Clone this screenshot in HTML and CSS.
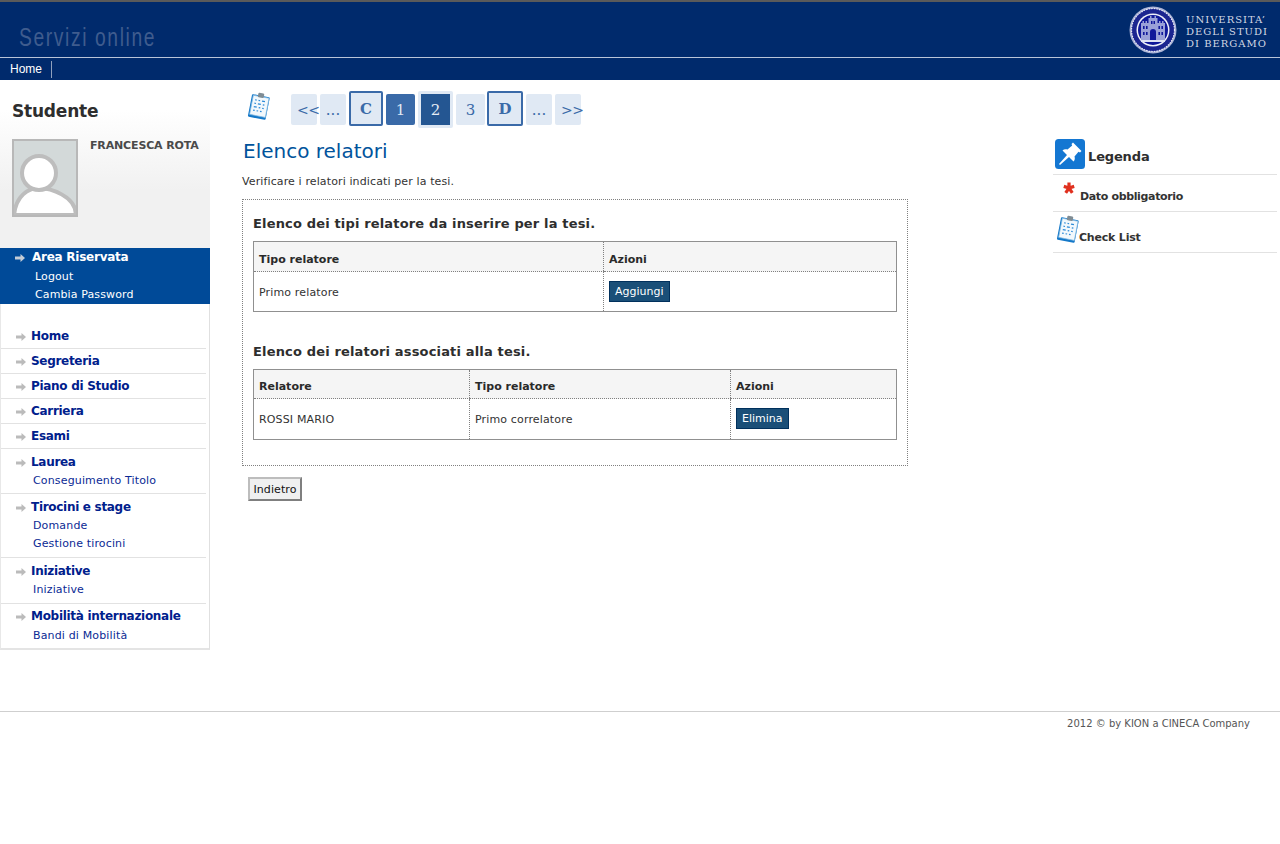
FILE: index.html
```html
<!DOCTYPE html>
<html lang="it">
<head>
<meta charset="utf-8">
<title>Elenco relatori</title>
<link rel="stylesheet" href="styles.css">
</head>
<body>
<svg class="defs" width="0" height="0" aria-hidden="true">
  <defs>
    <symbol id="clip" viewBox="0 0 24 28">
      <g transform="rotate(11 12 14)">
        <rect x="3" y="3.5" width="18" height="23" rx="1" fill="#1478c8"/>
        <rect x="4.4" y="4.5" width="16" height="19.5" fill="#f2f8fc" stroke="#7fb8e2" stroke-width=".7"/>
        <rect x="9" y="1" width="6" height="4.5" rx="1" fill="#7f8c94"/>
        <g fill="#2a8ad8">
          <rect x="7" y="8" width="1.6" height="1.2"/><rect x="10.5" y="8" width="1.6" height="1.2"/><rect x="14" y="8" width="3" height="1.2"/>
          <rect x="7" y="11.5" width="1.6" height="1.2"/><rect x="10.5" y="11.5" width="3" height="1.2"/><rect x="15.5" y="11.5" width="1.6" height="1.2"/>
          <rect x="7" y="15" width="3" height="1.2"/><rect x="12" y="15" width="1.6" height="1.2"/><rect x="15.5" y="15" width="1.6" height="1.2"/>
          <rect x="7" y="18.5" width="1.6" height="1.2"/><rect x="10.5" y="18.5" width="1.6" height="1.2"/><rect x="14" y="18.5" width="1.6" height="1.2"/>
        </g>
      </g>
    </symbol>
    <symbol id="arrow" viewBox="0 0 10 8">
      <path d="M0 2.5H5.5V0L10 4 5.5 8V5.5H0Z"/>
    </symbol>
  </defs>
</svg>

<header class="top">
  <div class="banner">
    <span class="brand">Servizi online</span>
    <div class="uni">
      <svg class="seal" viewBox="0 0 48 48" width="48" height="48" aria-hidden="true">
        <circle cx="24" cy="24" r="23.5" fill="#aab3d6"/>
        <circle cx="24" cy="24" r="21.5" fill="#1b2590" stroke="#e6e9f4" stroke-width="1.2" stroke-dasharray="1.6 1"/>
        <circle cx="24" cy="24" r="16.5" fill="#eef0f8"/>
        <circle cx="24" cy="24" r="15" fill="#10189a"/>
        <path d="M12 34V17h1.5v-2h1.5v2h1.5v-2H18v2h1.5v-5H21v-2h1.5v2h3v-2H27v2h1.5v5H30v-2h1.5v2H33v-2h1.5v2H36v17Z" fill="#9aa1d8"/>
        <path d="M21 34v-8a3 3 0 0 1 6 0v8Z" fill="#10189a"/>
        <path d="M14 20h1.6v3H14ZM17 20h1.6v3H17ZM29.4 20H31v3h-1.6ZM32.4 20H34v3h-1.6ZM14 26h1.6v3H14ZM17 26h1.6v3H17ZM29.4 26H31v3h-1.6ZM32.4 26H34v3h-1.6ZM22 15h1.5v3H22ZM24.5 15H26v3h-1.5Z" fill="#10189a"/>
        <rect x="12" y="34" width="24" height="2" fill="#dfe3f3"/>
      </svg>
      <div class="uni-name">UNIVERSITA’<br>DEGLI STUDI<br>DI BERGAMO</div>
    </div>
  </div>
  <nav class="topnav"><a class="topnav-item">Home</a></nav>
</header>

<div class="page">
  <aside class="side">
    <div class="profile">
      <h2 class="profile-title">Studente</h2>
      <div class="profile-body">
        <svg class="avatar" viewBox="0 0 62 74" width="62" height="74" aria-hidden="true">
          <rect width="62" height="74" fill="#d3d9d9"/>
          <path d="M0 74C2 55 14 47 25 47s37 8 37 27Z" fill="#fff" stroke="#bdbdbd" stroke-width="4"/>
          <circle cx="25" cy="32" r="17" fill="#fff" stroke="#bdbdbd" stroke-width="4"/>
        </svg>
        <div class="profile-name">FRANCESCA ROTA</div>
      </div>
    </div>
    <div class="reserved">
      <div class="reserved-title"><svg class="arrow arrow-light"><use href="#arrow"/></svg>Area Riservata</div>
      <a class="reserved-link">Logout</a>
      <a class="reserved-link">Cambia Password</a>
    </div>
    <ul class="menu">
      <li class="menu-item menu-first"><span class="menu-title"><svg class="arrow"><use href="#arrow"/></svg>Home</span></li>
      <li class="menu-item"><span class="menu-title"><svg class="arrow"><use href="#arrow"/></svg>Segreteria</span></li>
      <li class="menu-item"><span class="menu-title"><svg class="arrow"><use href="#arrow"/></svg>Piano di Studio</span></li>
      <li class="menu-item"><span class="menu-title"><svg class="arrow"><use href="#arrow"/></svg>Carriera</span></li>
      <li class="menu-item"><span class="menu-title"><svg class="arrow"><use href="#arrow"/></svg>Esami</span></li>
      <li class="menu-item menu-group menu-group-tight"><span class="menu-title"><svg class="arrow"><use href="#arrow"/></svg>Laurea</span><a class="menu-sub">Conseguimento Titolo</a></li>
      <li class="menu-item menu-group"><span class="menu-title"><svg class="arrow"><use href="#arrow"/></svg>Tirocini e stage</span><a class="menu-sub">Domande</a><a class="menu-sub">Gestione tirocini</a></li>
      <li class="menu-item menu-group"><span class="menu-title"><svg class="arrow"><use href="#arrow"/></svg>Iniziative</span><a class="menu-sub">Iniziative</a></li>
      <li class="menu-item menu-group menu-last"><span class="menu-title"><svg class="arrow"><use href="#arrow"/></svg>Mobilità internazionale</span><a class="menu-sub">Bandi di Mobilità</a></li>
    </ul>
  </aside>

  <main class="content">
    <div class="pager-row">
      <svg class="clip-lg"><use href="#clip"/></svg>
      <div class="pager">
        <a class="pg pg-w26 pg-arrows">&lt;&lt;</a>
        <a class="pg pg-w26">...</a>
        <a class="pg pg-letter pg-c">C</a>
        <a class="pg pg-done">1</a>
        <span class="pg-current"><a class="pg pg-active">2</a></span>
        <a class="pg">3</a>
        <a class="pg pg-letter pg-d">D</a>
        <a class="pg pg-w26">...</a>
        <a class="pg pg-w26 pg-arrows">&gt;&gt;</a>
      </div>
    </div>
    <h1 class="title">Elenco relatori</h1>
    <p class="intro">Verificare i relatori indicati per la tesi.</p>
    <section class="box">
      <h3 class="box-title">Elenco dei tipi relatore da inserire per la tesi.</h3>
      <table class="grid grid-a">
        <thead><tr><th class="col-a1">Tipo relatore</th><th>Azioni</th></tr></thead>
        <tbody><tr><td>Primo relatore</td><td><a class="btn">Aggiungi</a></td></tr></tbody>
      </table>
      <h3 class="box-title box-title-2">Elenco dei relatori associati alla tesi.</h3>
      <table class="grid grid-b">
        <thead><tr><th class="col-b1">Relatore</th><th class="col-b2">Tipo relatore</th><th>Azioni</th></tr></thead>
        <tbody><tr><td>ROSSI MARIO</td><td>Primo correlatore</td><td><a class="btn">Elimina</a></td></tr></tbody>
      </table>
    </section>
    <button class="back" type="button">Indietro</button>
  </main>

  <aside class="legend">
    <div class="legend-head">
      <svg class="pin" viewBox="0 0 30 30" width="30" height="30" aria-hidden="true">
        <rect width="30" height="30" rx="3.5" fill="#1477d2"/>
        <path d="M18 3.5 26.5 12 25 13.5 23.5 12.8 19.5 17.5C20.2 19.5 19.8 21.2 18.5 22.5L14 18 5 26 4 25 12 16 7.5 11.5C8.8 10.2 10.5 9.8 12.5 10.5L17.2 6.5 16.5 5Z" fill="#fff"/>
      </svg>
      <span class="legend-title">Legenda</span>
    </div>
    <div class="legend-row legend-req">
      <svg class="star" viewBox="0 0 12 12" width="12" height="12" aria-hidden="true">
        <path d="M6 6V.6M6 6 11.2 4.4M6 6 9.3 10.8M6 6 2.7 10.8M6 6 .8 4.4" stroke="#e0301e" stroke-width="3.2"/>
      </svg>
      <span class="legend-text">Dato obbligatorio</span>
    </div>
    <div class="legend-row legend-check">
      <svg class="clip-sm"><use href="#clip"/></svg>
      <span class="legend-text legend-text-check">Check List</span>
    </div>
  </aside>
</div>

<footer class="foot">2012 © by KION a CINECA Company</footer>
</body>
</html>
```
FILE: styles.css
```css
* { box-sizing: border-box; }
html, body { margin: 0; padding: 0; background: #fff; }
body { font-family: "DejaVu Sans", Verdana, sans-serif; font-size: 11px; color: #333; height: 844px; overflow: hidden; }
.defs { display: block; height: 0; }

.top { background: #002a6c; border-top: 2px solid #5a5a5a; height: 80px; }
.banner { height: 56px; border-bottom: 1px solid #b9c4d8; display: flex; justify-content: space-between; align-items: flex-start; }
.brand { display: block; font-family: "Liberation Sans", sans-serif; font-size: 25px; letter-spacing: 2.1px; color: #3f5c8e; margin: 21px 0 0 19px; line-height: 28px; transform: scaleX(.77); transform-origin: left center; white-space: nowrap; }
.uni { display: flex; margin: 4px 12px 0 0; }
.seal { display: block; margin-right: 9px; }
.uni-name { font-family: "DejaVu Serif", serif; font-size: 10px; line-height: 12px; letter-spacing: 1px; color: #d3d8e4; margin-top: 8px; white-space: nowrap; width: 82px; }
.topnav { height: 22px; display: flex; align-items: flex-start; padding-top: 3px; }
.topnav-item { font-family: "Liberation Sans", sans-serif; font-size: 12px; line-height: 17px; color: #fff; padding: 0 9px 0 10px; border-right: 1px solid #8fa0bd; }

.page { display: flex; height: 631px; }

.side { width: 210px; flex: none; }
.profile { height: 168px; padding: 21px 0 0 12px; background: linear-gradient(#fff 30px, #f1f1f1 110px); overflow: hidden; }
.profile-title { margin: 0 0 18px; font-size: 17px; line-height: 20px; font-weight: bold; color: #2e2e2e; letter-spacing: -.2px; }
.profile-body { display: flex; }
.avatar { box-sizing: content-box; border: 2px solid #b8b8b8; width: 62px; height: 74px; display: block; flex: none; }
.profile-name { font-size: 11px; font-weight: bold; color: #4a4a4a; margin: 0 0 0 12px; line-height: 13px; white-space: nowrap; letter-spacing: -.15px; }

.reserved { height: 56px; background: #004a98; color: #fff; padding-top: 1px; }
.reserved-title { font-size: 12px; letter-spacing: -.25px; font-weight: bold; line-height: 16px; padding-left: 15px; display: flex; align-items: center; margin-bottom: 3px; }
.reserved-link { display: block; font-size: 11px; line-height: 18px; padding-left: 35px; letter-spacing: .12px; }
.arrow { width: 10px; height: 8px; margin: 2px 5px 0 0; fill: #bbb; flex: none; display: inline-block; }
.arrow-light { fill: #c4ccd6; margin-right: 7px; }

.menu { list-style: none; margin: 0; padding: 0 0 0 1px; width: 210px; border-left: 1px solid #e8e8e8; border-right: 1px solid #e0e0e0; border-bottom: 2px solid #e4e4e4; }
.menu-item { width: 205px; margin-left: -1px; border-bottom: 1px solid #e2e2e2; padding: 4px 0 4px 15px; }
.menu-first { padding-top: 24px; }
.menu-group { padding-top: 5px; }
.menu-group-tight { padding-bottom: 3px; }
.menu-group .menu-title { margin-bottom: 2px; }
.menu-last { border-bottom: 0; padding-top: 4px; padding-bottom: 3px; }
.menu-last .menu-title { margin-bottom: 3px; }
.menu-title { display: flex; align-items: center; font-size: 12px; letter-spacing: -.3px; font-weight: bold; line-height: 16px; color: #00208c; }
.menu-sub { display: block; font-size: 11px; line-height: 18px; color: #0b2a94; padding-left: 17px; letter-spacing: .15px; }

.content { width: 698px; flex: none; padding: 12px 0 0 32px; }
.pager-row { display: flex; height: 36px; position: relative; }
.clip-lg { width: 24px; height: 28px; margin: 0 0 0 5px; flex: none; }
.pager { display: flex; align-items: flex-start; margin: -1px 0 0 20px; gap: 3px; }
.pg { display: flex; align-items: center; justify-content: center; width: 29px; height: 31px; margin-top: 3px; background: #e0e9f4; border-radius: 2px; color: #3a6aa8; font-family: "DejaVu Serif", serif; font-size: 15px; }
.pg-w26 { width: 26px; }
.pg-arrows { font-family: "DejaVu Sans", sans-serif; font-size: 14px; letter-spacing: -.4px; white-space: nowrap; justify-content: flex-start; padding-left: 6px; }
.pg-letter { height: 35px; margin-top: 0; border: 2px solid #3a6aa8; font-weight: bold; }
.pg-c { width: 34px; }
.pg-d { width: 36px; margin-left: -1px; }
.pg-done { background: #3a6aa8; color: #dfe8f3; }
.pg-current { display: block; width: 35px; height: 37px; background: #e0e9f4; padding: 3px; border-radius: 2px; }
.pg-active { width: 29px; margin: 0; background: #245692; color: #e6edf6; border-radius: 0; }

.title { margin: 10px 0 0 1px; font-size: 20px; line-height: 26px; font-weight: normal; color: #00539c; }
.intro { margin: 11px 0 0; line-height: 14px; font-size: 11px; color: #333; letter-spacing: .12px; }
.box { width: 666px; height: 267px; margin-top: 10px; border: 1px dotted #808080; padding: 16px 10px 0; }
.box-title { margin: 0 0 10px; font-size: 13px; letter-spacing: .16px; line-height: 15px; font-weight: bold; color: #2e2e2e; }
.box-title-2 { margin-top: 32px; }
.grid { width: 644px; border-collapse: collapse; border: 1px solid #909090; table-layout: fixed; }
.grid th, .grid td { text-align: left; padding: 0 5px; font-size: 11px; border-left: 1px dotted #808080; color: #333; }
.grid th:first-child, .grid td:first-child { border-left: 0; }
.grid th { height: 30px; background: #f5f5f5; font-weight: bold; border-bottom: 1px dotted #808080; color: #2a2a2a; vertical-align: middle; padding-top: 5px; }
.grid td { height: 40px; padding-top: 2px; letter-spacing: .15px; }
.grid-b th { height: 29px; }
.grid-b td { height: 41px; padding-top: 1px; }
.col-a1 { width: 350px; }
.col-b1 { width: 216px; }
.col-b2 { width: 261px; }
.btn { position: relative; top: -1px; display: inline-block; padding: 0 5px; line-height: 19px; background: #1a4f78; border: 1px solid #00305c; color: #fff; font-size: 11px; vertical-align: middle; letter-spacing: 0; }
.back { display: block; margin: 11px 0 0 6px; width: 54px; height: 24px; padding: 0; background: #f0f0f0; border: 2px solid; border-color: #bdbdbd #7f7f7f #7f7f7f #bdbdbd; font-family: "DejaVu Sans", Verdana, sans-serif; font-size: 11px; color: #111; letter-spacing: .1px; }

.legend { width: 224px; flex: none; margin-left: 145px; padding-top: 59px; }
.legend-head { height: 36px; display: flex; align-items: flex-start; border-bottom: 1px solid #e2e2e2; padding-left: 2px; }
.legend-title { font-size: 13px; font-weight: bold; color: #2e2e2e; margin: 9px 0 0 3px; line-height: 18px; letter-spacing: -.15px; }
.legend-row { position: relative; display: flex; border-bottom: 1px solid #e2e2e2; }
.legend-req { height: 37px; }
.legend-check { height: 41px; }
.legend-text { font-size: 11px; font-weight: bold; color: #333; letter-spacing: -.35px; }
.legend-text-check { letter-spacing: -.2px; }
.star { margin: 7px 0 0 10px; flex: none; }
.legend-req .legend-text { margin: 15px 0 0 5px; line-height: 14px; }
.clip-sm { width: 24px; height: 28px; margin: 3px 0 0 3px; flex: none; }
.legend-check .legend-text { margin: 19px 0 0 -1px; line-height: 14px; }

.foot { border-top: 1px solid #cfcfcf; font-size: 10px; line-height: 13px; color: #555; text-align: right; padding: 5px 30px 0 0; }
```
